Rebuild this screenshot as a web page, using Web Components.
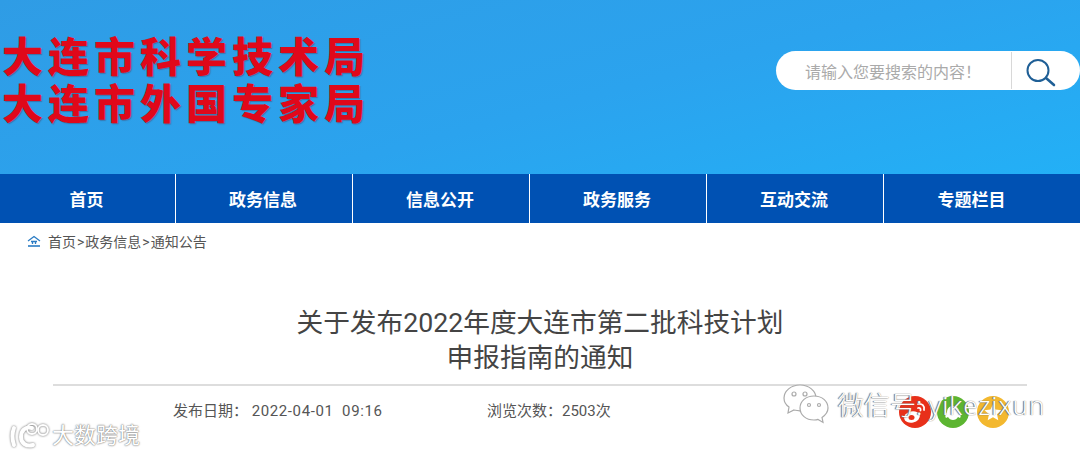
<!DOCTYPE html>
<html lang="zh">
<head>
<meta charset="utf-8">
<style>
html, body { margin: 0; padding: 0; background: #fff; }
body { width: 1080px; height: 456px; overflow: hidden; position: relative; font-family: "Roboto", "Noto Sans CJK SC", sans-serif; }
</style>
</head>
<body>
<site-header>
  <span slot="line1">大连市科学技术局</span>
  <span slot="line2">大连市外国专家局</span>
</site-header>
<main-nav></main-nav>
<bread-crumb></bread-crumb>
<article-head></article-head>
<water-marks></water-marks>

<script>
class SiteHeader extends HTMLElement {
  connectedCallback() {
    this.attachShadow({ mode: 'open' });
    this.shadowRoot.innerHTML = `
      <style>
        :host {
          display: flex;
          justify-content: space-between;
          align-items: flex-start;
          height: 174px;
          background: linear-gradient(165deg, #2f9ce5 0%, #2ba3ee 55%, #23b0f6 100%);
        }
        .logo {
          margin: 35px 0 0 2px;
          display: flex;
          flex-direction: column;
          font-family: "Liberation Sans", "Noto Sans CJK SC", sans-serif;
          font-weight: 900;
          font-size: 41px;
          line-height: 47px;
          letter-spacing: 5px;
          color: #e0081a;
          text-shadow: 1px 1px 1px rgba(90, 30, 50, .35);
          white-space: nowrap;
        }
        .search {
          margin-top: 51px;
          width: 304px;
          height: 39px;
          box-sizing: border-box;
          background: #fff;
          border-radius: 20px;
          display: flex;
          align-items: center;
        }
        .hint {
          width: 235px;
          box-sizing: border-box;
          padding-left: 29px;
          font-size: 16px;
          color: #aaa;
          white-space: nowrap;
        }
        .go {
          flex: 1;
          height: 37px;
          border-left: 1px solid #d8d8d8;
          display: flex;
          align-items: center;
          padding-left: 14px;
        }
      </style>
      <div class="logo"><slot name="line1"></slot><slot name="line2"></slot></div>
      <div class="search">
        <div class="hint">请输入您要搜索的内容！</div>
        <div class="go">
          <svg width="32" height="32" viewBox="0 0 32 32" fill="none" stroke="#1f5f96">
            <circle cx="12" cy="15.500" r="10.500" stroke-width="2"/>
            <path d="M20 23l8 7" stroke-width="2.600" stroke-linecap="round"/>
          </svg>
        </div>
      </div>
    `;
  }
}

class MainNav extends HTMLElement {
  connectedCallback() {
    this.attachShadow({ mode: 'open' });
    const items = ['首页', '政务信息', '信息公开', '政务服务', '互动交流', '专题栏目'];
    this.shadowRoot.innerHTML = `
      <style>
        :host {
          display: grid;
          grid-template-columns: 176px repeat(5, 177px);
          height: 49px;
          background: #0051b3;
        }
        a {
          display: flex;
          align-items: center;
          justify-content: center;
          padding-right: 2px;
          color: #fff;
          font-size: 17px;
          font-weight: 700;
          text-decoration: none;
          border-right: 1px solid #fff;
        }
        a:last-child { border-right: none; }
      </style>
      ${items.map(t => `<a href="#">${t}</a>`).join('')}
    `;
  }
}

class BreadCrumb extends HTMLElement {
  connectedCallback() {
    this.attachShadow({ mode: 'open' });
    this.shadowRoot.innerHTML = `
      <style>
        :host {
          display: flex;
          align-items: center;
          gap: 7px;
          height: 36px;
          padding: 0 0 4px 27px;
          font-size: 14px;
          color: #555;
        }
        svg { display: block; }
        i { font-style: normal; margin: 0 1px; }
      </style>
      <svg width="14" height="12" viewBox="0 0 14 12" fill="none" stroke="#2b7cc4" stroke-width="1.300">
        <path d="M1 6l6-4.500L13 6"/>
        <path d="M4 6.500h6M5.500 9V7M8.500 9V7"/>
        <path d="M1 11h12" stroke-width="1.600"/>
      </svg>
      <span>首页<i>&gt;</i>政务信息<i>&gt;</i>通知公告</span>
    `;
  }
}

class ArticleHead extends HTMLElement {
  connectedCallback() {
    this.attachShadow({ mode: 'open' });
    this.shadowRoot.innerHTML = `
      <style>
        :host {
          display: block;
          margin: 0 53px;
          padding-top: 43px;
        }
        h1 {
          margin: 0;
          height: 80px;
          box-sizing: border-box;
          text-align: center;
          font-weight: 400;
          font-size: 26.700px;
          line-height: 35px;
          color: #444;
          border-bottom: 2px solid #ddd;
        }
        .meta {
          display: flex;
          padding: 15px 0 0 120px;
          font-size: 15px;
          line-height: 20px;
          color: #555;
          white-space: pre;
        }
        .date { width: 314px; }
        .num { letter-spacing: .6px; }
      </style>
      <h1>关于发布2022年度大连市第二批科技计划<br>申报指南的通知</h1>
      <div class="meta">
        <span class="date">发布日期： <span class="num">2022-04-01  09:16</span></span>
        <span>浏览次数：2503次</span>
      </div>
    `;
  }
}

class WaterMarks extends HTMLElement {
  connectedCallback() {
    this.attachShadow({ mode: 'open' });
    this.shadowRoot.innerHTML = `
      <style>
        :host { display: block; }
        .abs { position: absolute; }
        .dot { width: 32px; height: 32px; top: 396px; }
        .left {
          left: 52px;
          top: 421px;
          font-size: 22px;
          line-height: 30px;
          color: #fff;
          text-shadow: 0 0 2px #777, 0 0 1px #777;
          white-space: nowrap;
        }
        .wx {
          left: 838px;
          top: 389px;
          font-family: "Noto Sans", "Noto Sans CJK SC", sans-serif;
          font-size: 26px;
          line-height: 32px;
          font-weight: 300;
          color: #fff;
          text-shadow: -1px 0 1px #666, 0 0 1px #888;
          white-space: nowrap;
        }
        .wx span { letter-spacing: 1px; }
      </style>
      <svg class="abs" style="left:8px;top:420px" width="44" height="30" viewBox="0 0 44 30" fill="none" stroke="#fff" stroke-linecap="round">
        <g filter="drop-shadow(0 0 1px #666)">
          <path d="M6 8c-2 5-2 11 0 17" stroke-width="4"/>
          <path d="M24 8c-7-2-11 3-11 9s5 10 12 8" stroke-width="4"/>
          <circle cx="24" cy="9" r="5" stroke-width="1.800"/>
          <circle cx="35" cy="10" r="5" stroke-width="1.800"/>
        </g>
      </svg>
      <div class="abs left">大数跨境</div>
      <svg class="abs dot" style="left:899px" viewBox="0 0 32 32">
        <circle cx="16" cy="16" r="16" fill="#e8301a"/>
        <ellipse cx="13" cy="21" rx="8" ry="5.500" fill="#fff" transform="rotate(-12 13 21)"/>
        <ellipse cx="12.500" cy="21.500" rx="3" ry="2.500" fill="#e8301a"/>
        <path d="M19 8c4-1 7 2 6 6M19 12c2-.5 3 .5 2.500 2.500" fill="none" stroke="#fff" stroke-width="1.800" stroke-linecap="round"/>
      </svg>
      <svg class="abs dot" style="left:937px" viewBox="0 0 32 32">
        <circle cx="16" cy="16" r="16" fill="#5cb531"/>
        <path d="M16 10c-4 0-6 3-6 6-2 3-2 5-1 6l2-1c1 2 3 3 5 3s4-1 5-3l2 1c1-1 1-3-1-6 0-3-2-6-6-6z" fill="#fff"/>
      </svg>
      <svg class="abs dot" style="left:977px" viewBox="0 0 32 32">
        <circle cx="16" cy="16" r="16" fill="#f3b82f"/>
        <path d="M16 8l2.500 5.500 6 .7-4.500 4 1.300 6L16 21.200 10.700 24.200l1.300-6-4.500-4 6-.7z" fill="#fff"/>
      </svg>
      <svg class="abs" style="left:782px;top:384px" width="48" height="44" viewBox="0 0 48 44" fill="#fff" stroke="#aaa" stroke-width="1.200">
        <path d="M18 1C9 1 2 7 2 14c0 4 2 7 5 9l-1 6 6-3c2 .5 4 .8 6 .8C27 27 34 21 34 14S27 1 18 1z"/>
        <path d="M32 12c-8 0-14 5-14 12s6 12 14 12c1.500 0 3-.2 4-.6l5 3-1-5c3-2 6-5 6-9.400 0-7-6-12-14-12z"/>
        <circle cx="12" cy="10" r="2"/><circle cx="23" cy="10" r="2"/>
        <circle cx="27" cy="21" r="1.500"/><circle cx="37" cy="21" r="1.500"/>
      </svg>
      <div class="abs wx">微信号: <span>yikezixun</span></div>
    `;
  }
}

customElements.define('site-header', SiteHeader);
customElements.define('main-nav', MainNav);
customElements.define('bread-crumb', BreadCrumb);
customElements.define('article-head', ArticleHead);
customElements.define('water-marks', WaterMarks);
</script>
</body>
</html>
